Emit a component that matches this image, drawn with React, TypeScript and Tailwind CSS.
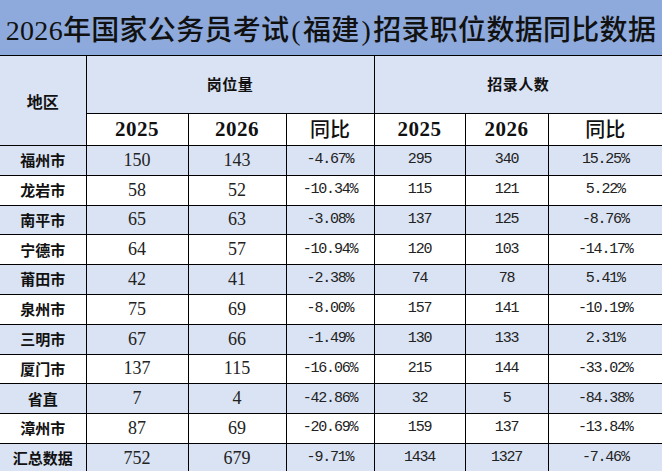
import React from 'react';

type Row = {
  region: string;
  posA: number;
  posB: number;
  posRate: string;
  hireA: number;
  hireB: number;
  hireRate: string;
};

const ROWS: Row[] = [
  { region: '福州市', posA: 150, posB: 143, posRate: '-4.67%', hireA: 295, hireB: 340, hireRate: '15.25%' },
  { region: '龙岩市', posA: 58, posB: 52, posRate: '-10.34%', hireA: 115, hireB: 121, hireRate: '5.22%' },
  { region: '南平市', posA: 65, posB: 63, posRate: '-3.08%', hireA: 137, hireB: 125, hireRate: '-8.76%' },
  { region: '宁德市', posA: 64, posB: 57, posRate: '-10.94%', hireA: 120, hireB: 103, hireRate: '-14.17%' },
  { region: '莆田市', posA: 42, posB: 41, posRate: '-2.38%', hireA: 74, hireB: 78, hireRate: '5.41%' },
  { region: '泉州市', posA: 75, posB: 69, posRate: '-8.00%', hireA: 157, hireB: 141, hireRate: '-10.19%' },
  { region: '三明市', posA: 67, posB: 66, posRate: '-1.49%', hireA: 130, hireB: 133, hireRate: '2.31%' },
  { region: '厦门市', posA: 137, posB: 115, posRate: '-16.06%', hireA: 215, hireB: 144, hireRate: '-33.02%' },
  { region: '省直', posA: 7, posB: 4, posRate: '-42.86%', hireA: 32, hireB: 5, hireRate: '-84.38%' },
  { region: '漳州市', posA: 87, posB: 69, posRate: '-20.69%', hireA: 159, hireB: 137, hireRate: '-13.84%' },
  { region: '汇总数据', posA: 752, posB: 679, posRate: '-9.71%', hireA: 1434, hireB: 1327, hireRate: '-7.46%' },
];

const cjk = "font-['Noto_Sans_CJK_SC',sans-serif]";
const serifNum = "font-['Liberation_Serif','Noto_Sans_CJK_SC',serif]";
const monoNum = "font-['Liberation_Mono','Noto_Sans_CJK_SC',monospace]";

const cell = 'border border-black text-center align-middle p-0 first:border-l-0 last:border-r-0';
const mono = `${cell} ${monoNum} text-[15px] tracking-[-1.2px] text-[#222]`;

export default function App() {
  return (
    <div className="w-[662px] h-[471px] overflow-hidden bg-white text-[#111]">
      {/* title band */}
      <div className="h-[56px] bg-[#8eaadc] border-b border-black flex items-center justify-center pt-[6px] text-[28px] font-medium leading-none tracking-[0.3px] whitespace-nowrap font-['Liberation_Serif','Noto_Sans_CJK_SC',serif]">
        2026年国家公务员考试<span className="mx-[2px]">(</span>福建<span className="mx-[2px]">)</span>招录职位数据同比数据
      </div>

      <table className="w-[662px] table-fixed border-collapse">
        <colgroup>
          <col className="w-[86px]" />
          <col className="w-[102px]" />
          <col className="w-[98px]" />
          <col className="w-[88px]" />
          <col className="w-[91px]" />
          <col className="w-[83px]" />
          <col className="w-[114px]" />
        </colgroup>
        <thead>
          <tr className="h-[57px] bg-[#dae3f3]">
            <th rowSpan={2} className={`${cell} border-t-0 ${cjk} text-[16px] font-bold`}>
              地区
            </th>
            <th colSpan={3} className={`${cell} border-t-0 ${cjk} text-[15px] font-bold tracking-[0.5px]`}>
              岗位量
            </th>
            <th colSpan={3} className={`${cell} border-t-0 ${cjk} text-[15px] font-bold tracking-[0.5px]`}>
              招录人数
            </th>
          </tr>
          <tr className="h-[30px] bg-white">
            <th className={`${cell} ${serifNum} text-[21px] font-bold tracking-[0.5px] !border-l`}>2025</th>
            <th className={`${cell} ${serifNum} text-[21px] font-bold tracking-[0.5px]`}>2026</th>
            <th className={`${cell} ${cjk} text-[20px] font-medium`}>同比</th>
            <th className={`${cell} ${serifNum} text-[21px] font-bold tracking-[0.5px]`}>2025</th>
            <th className={`${cell} ${serifNum} text-[21px] font-bold tracking-[0.5px]`}>2026</th>
            <th className={`${cell} ${cjk} text-[20px] font-medium`}>同比</th>
          </tr>
        </thead>
        <tbody>
          {ROWS.map((r, i) => (
            <tr key={r.region} className={`h-[29.8px] ${i % 2 === 0 ? 'bg-[#dae3f3]' : 'bg-white'}`}>
              <td className={`${cell} ${cjk} text-[15px] font-bold`}>{r.region}</td>
              <td className={`${cell} ${serifNum} text-[18px] text-[#222]`}>{r.posA}</td>
              <td className={`${cell} ${serifNum} text-[18px] text-[#222]`}>{r.posB}</td>
              <td className={mono}>{r.posRate}</td>
              <td className={mono}>{r.hireA}</td>
              <td className={mono}>{r.hireB}</td>
              <td className={mono}>{r.hireRate}</td>
            </tr>
          ))}
        </tbody>
      </table>
    </div>
  );
}
